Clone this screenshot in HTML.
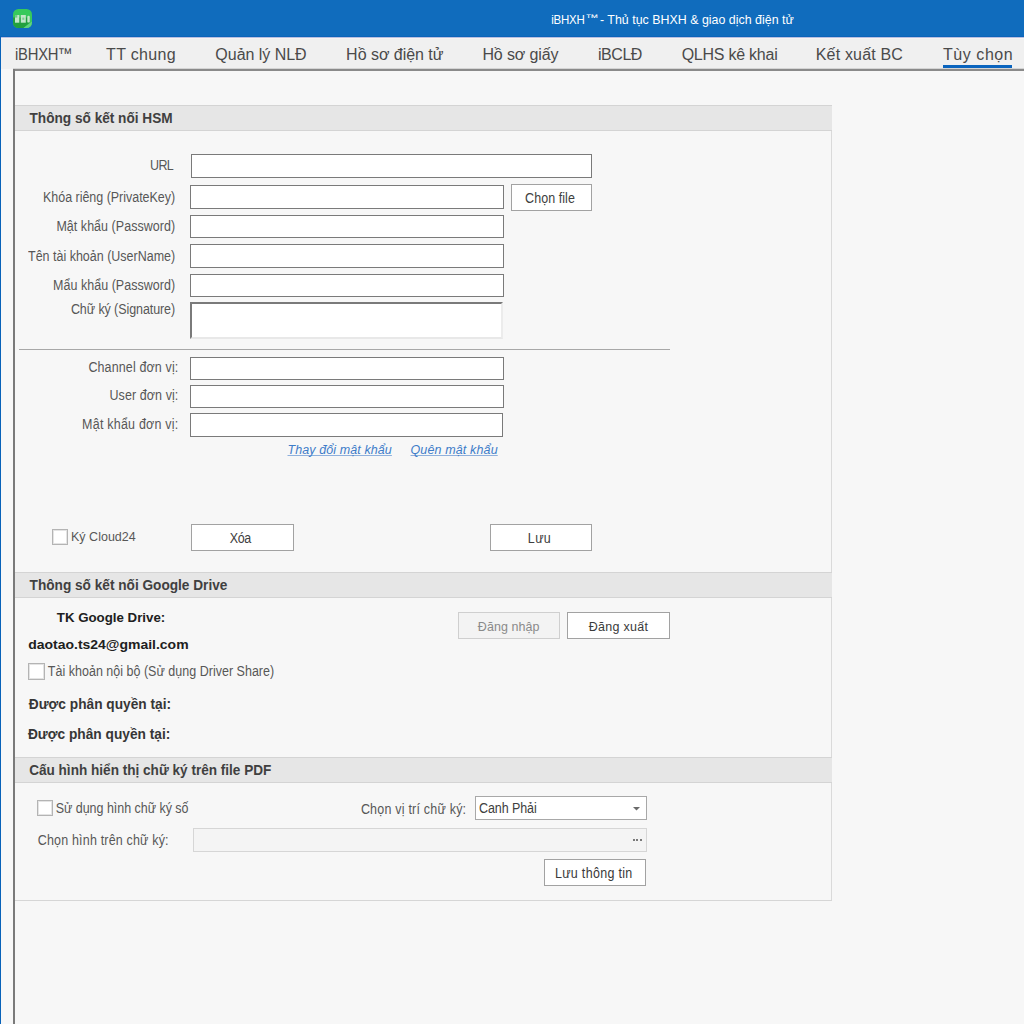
<!DOCTYPE html>
<html><head><meta charset="utf-8"><style>
html,body{margin:0;padding:0;width:1024px;height:1024px;overflow:hidden;background:#f7f7f7;}
body{position:relative;font-family:"Liberation Sans",sans-serif;}
.t{position:absolute;white-space:nowrap;}
</style></head><body>
<div style="position:absolute;left:0px;top:0px;width:1024px;height:37px;box-sizing:border-box;background:#106cbd;"></div>
<svg style="position:absolute;left:13px;top:9px" width="19" height="19" viewBox="0 0 19 19">
<defs><clipPath id="ic"><rect x="0" y="0" width="19" height="19" rx="5.5" ry="5.5"/></clipPath></defs>
<g clip-path="url(#ic)">
<rect x="0" y="0" width="19" height="19" fill="#37c95b"/>
<path d="M0 8.5 L17 8.5 L17 13.5 L10.5 19 L0 19 Z" fill="#22a03d"/>
<path d="M10.5 19 L19 12.5 L19 19 Z" fill="#5fd47b"/>
<rect x="2" y="6" width="4.3" height="7.7" fill="#c2e7c9"/>
<rect x="2" y="6" width="2.3" height="2.6" fill="#6fca87"/>
<rect x="7.8" y="6" width="5" height="7.7" fill="#c2e7c9"/>
<rect x="9.3" y="8.6" width="2" height="2.2" fill="#7ccd90"/>
<rect x="14.3" y="6.7" width="2.5" height="6.9" rx="1.2" fill="#c2e7c9"/>
</g></svg>
<div class="t" style="transform:scaleY(1.08);transform-origin:0 10.00px;left:551.21px;top:14.00px;font-size:11.50px;line-height:12.00px;letter-spacing:-0.221px;color:#ffffff;">iBHXH</div>
<div class="t" style="transform:scaleY(0.72);transform-origin:0 2.86px;left:585.21px;top:12.00px;font-size:13.25px;line-height:15.00px;letter-spacing:0.000px;color:#ffffff;">™</div>
<div class="t" style="left:600.00px;top:13.00px;font-size:12.40px;line-height:14.00px;letter-spacing:0.014px;color:#ffffff;">- Thủ tục BHXH &amp; giao dịch điện tử</div>
<div style="position:absolute;left:1px;top:37px;width:1023px;height:32px;box-sizing:border-box;background:#f0f0f0;"></div>
<div style="position:absolute;left:0px;top:36px;width:1024px;height:1px;box-sizing:border-box;background:#0b64b9;"></div>
<div style="position:absolute;left:1px;top:37px;width:1023px;height:1px;box-sizing:border-box;background:#b9c0e2;"></div>
<div style="position:absolute;left:1px;top:38px;width:1023px;height:1px;box-sizing:border-box;background:#f6f4f2;"></div>
<div class="t" style="left:57.73px;top:45.00px;font-size:15.19px;line-height:17.00px;letter-spacing:0.000px;color:#4a4a4a;">™</div>
<div class="t" style="transform:scaleY(1.08);transform-origin:0 13.00px;left:15.01px;top:47.00px;font-size:14.80px;line-height:16.00px;letter-spacing:-0.238px;color:#4a4a4a;">iBHXH</div>
<div class="t" style="left:106.08px;top:46.00px;font-size:16.00px;line-height:17.00px;letter-spacing:0.319px;color:#4a4a4a;">TT chung</div>
<div class="t" style="left:215.36px;top:46.00px;font-size:16.00px;line-height:17.00px;letter-spacing:-0.028px;color:#4a4a4a;">Quản lý NLĐ</div>
<div class="t" style="left:346.12px;top:46.00px;font-size:16.00px;line-height:17.00px;letter-spacing:-0.028px;color:#4a4a4a;">Hồ sơ điện tử</div>
<div class="t" style="left:482.42px;top:46.00px;font-size:16.00px;line-height:17.00px;letter-spacing:-0.112px;color:#4a4a4a;">Hồ sơ giấy</div>
<div class="t" style="left:598.04px;top:46.00px;font-size:16.00px;line-height:17.00px;letter-spacing:-0.475px;color:#4a4a4a;">iBCLĐ</div>
<div class="t" style="left:681.66px;top:46.00px;font-size:16.00px;line-height:17.00px;letter-spacing:-0.243px;color:#4a4a4a;">QLHS kê khai</div>
<div class="t" style="left:815.72px;top:46.00px;font-size:16.00px;line-height:17.00px;letter-spacing:0.182px;color:#4a4a4a;">Kết xuất BC</div>
<div class="t" style="left:942.98px;top:46.00px;font-size:16.00px;line-height:17.00px;letter-spacing:0.558px;color:#4a4a4a;">Tùy chọn</div>
<div style="position:absolute;left:943px;top:65px;width:69px;height:3px;box-sizing:border-box;background:#0a64be;"></div>
<div style="position:absolute;left:1px;top:69px;width:1023px;height:955px;box-sizing:border-box;background:#f7f7f7;"></div>
<div style="position:absolute;left:13px;top:68px;width:1011px;height:1px;box-sizing:border-box;background:#d4d4d4;"></div>
<div style="position:absolute;left:13px;top:69px;width:1011px;height:2px;box-sizing:border-box;background:#8a8a8a;"></div>
<div style="position:absolute;left:13px;top:69px;width:2px;height:955px;box-sizing:border-box;background:#7a7a7a;"></div>
<div style="position:absolute;left:0px;top:36px;width:1px;height:988px;box-sizing:border-box;background:#0862b9;"></div>
<div style="position:absolute;left:831px;top:105px;width:1px;height:796px;box-sizing:border-box;background:#dadada;"></div>
<div style="position:absolute;left:15px;top:900px;width:817px;height:1px;box-sizing:border-box;background:#d6d6d6;"></div>
<div style="position:absolute;left:15px;top:105px;width:817px;height:26px;box-sizing:border-box;background:#e6e6e6;border-top:1px solid #d4d4d4;border-bottom:1px solid #d4d4d4;"></div>
<div class="t" style="transform:scaleY(1.12);transform-origin:0 12.00px;left:29.56px;top:111.00px;font-size:13.64px;line-height:15.00px;letter-spacing:0.000px;font-weight:bold;color:#404040;">Thông số kết nối HSM</div>
<div style="position:absolute;left:15px;top:572px;width:817px;height:26px;box-sizing:border-box;background:#e6e6e6;border-top:1px solid #d4d4d4;border-bottom:1px solid #d4d4d4;"></div>
<div class="t" style="transform:scaleY(1.12);transform-origin:0 12.00px;left:29.56px;top:578.00px;font-size:13.65px;line-height:15.00px;letter-spacing:0.000px;font-weight:bold;color:#404040;">Thông số kết nối Google Drive</div>
<div style="position:absolute;left:15px;top:757px;width:817px;height:26px;box-sizing:border-box;background:#e6e6e6;border-top:1px solid #d4d4d4;border-bottom:1px solid #d4d4d4;"></div>
<div class="t" style="transform:scaleY(1.12);transform-origin:0 12.00px;left:29.16px;top:763.00px;font-size:13.58px;line-height:15.00px;letter-spacing:0.000px;font-weight:bold;color:#404040;">Cấu hình hiển thị chữ ký trên file PDF</div>
<div class="t" style="transform:scaleY(1.1);transform-origin:0 11.00px;left:150.12px;top:159.00px;font-size:12.50px;line-height:14.00px;letter-spacing:-0.652px;color:#575757;">URL</div>
<div style="position:absolute;left:191px;top:154px;width:401px;height:24px;box-sizing:border-box;background:#fff;border:1px solid #7a7a7a;"></div>
<div class="t" style="transform:scaleY(1.1);transform-origin:0 11.00px;left:43.00px;top:191.00px;font-size:12.50px;line-height:14.00px;letter-spacing:-0.025px;color:#575757;">Khóa riêng (PrivateKey)</div>
<div style="position:absolute;left:190px;top:185px;width:314px;height:24px;box-sizing:border-box;background:#fff;border:1px solid #7a7a7a;"></div>
<div style="position:absolute;left:511px;top:184px;width:81px;height:27px;box-sizing:border-box;background:#fff;border:1px solid #a2a2a2;"></div>
<div class="t" style="transform:scaleY(1.1);transform-origin:0 11.00px;left:525.08px;top:192.00px;font-size:12.50px;line-height:14.00px;letter-spacing:0.055px;color:#404040;">Chọn file</div>
<div class="t" style="transform:scaleY(1.1);transform-origin:0 11.00px;left:56.40px;top:220.00px;font-size:12.50px;line-height:14.00px;letter-spacing:0.037px;color:#575757;">Mật khẩu (Password)</div>
<div style="position:absolute;left:190px;top:215px;width:314px;height:23px;box-sizing:border-box;background:#fff;border:1px solid #7a7a7a;"></div>
<div class="t" style="transform:scaleY(1.1);transform-origin:0 11.00px;left:28.05px;top:250.00px;font-size:12.50px;line-height:14.00px;letter-spacing:-0.007px;color:#575757;">Tên tài khoản (UserName)</div>
<div style="position:absolute;left:190px;top:244px;width:314px;height:24px;box-sizing:border-box;background:#fff;border:1px solid #7a7a7a;"></div>
<div class="t" style="transform:scaleY(1.1);transform-origin:0 11.00px;left:53.00px;top:279.00px;font-size:12.50px;line-height:14.00px;letter-spacing:0.033px;color:#575757;">Mẩu khẩu (Password)</div>
<div style="position:absolute;left:190px;top:274px;width:314px;height:23px;box-sizing:border-box;background:#fff;border:1px solid #7a7a7a;"></div>
<div class="t" style="transform:scaleY(1.1);transform-origin:0 11.00px;left:70.88px;top:303.00px;font-size:12.50px;line-height:14.00px;letter-spacing:-0.079px;color:#575757;">Chữ ký (Signature)</div>
<div style="position:absolute;left:190px;top:302px;width:313px;height:37px;box-sizing:border-box;background:#fff;border-top:2px solid #7a7a7a;border-left:2px solid #7a7a7a;border-right:2px solid #ececec;border-bottom:2px solid #e8e8e8;"></div>
<div style="position:absolute;left:19px;top:349px;width:651px;height:1px;box-sizing:border-box;background:#a8a8a8;"></div>
<div class="t" style="transform:scaleY(1.1);transform-origin:0 11.00px;left:88.38px;top:361.00px;font-size:12.50px;line-height:14.00px;letter-spacing:0.129px;color:#575757;">Channel đơn vị:</div>
<div style="position:absolute;left:190px;top:357px;width:314px;height:23px;box-sizing:border-box;background:#fff;border:1px solid #7a7a7a;"></div>
<div class="t" style="transform:scaleY(1.1);transform-origin:0 11.00px;left:109.53px;top:389.00px;font-size:12.50px;line-height:14.00px;letter-spacing:0.076px;color:#575757;">User đơn vị:</div>
<div style="position:absolute;left:190px;top:385px;width:314px;height:23px;box-sizing:border-box;background:#fff;border:1px solid #7a7a7a;"></div>
<div class="t" style="transform:scaleY(1.1);transform-origin:0 11.00px;left:82.10px;top:418.00px;font-size:12.50px;line-height:14.00px;letter-spacing:0.216px;color:#575757;">Mật khẩu đơn vị:</div>
<div style="position:absolute;left:190px;top:413px;width:313px;height:24px;box-sizing:border-box;background:#fff;border:1px solid #7a7a7a;"></div>
<div class="t" style="left:287.50px;top:443.00px;font-size:12.50px;line-height:14.00px;letter-spacing:0.092px;font-style:italic;color:#3d7cc9;text-decoration:underline;text-decoration-skip-ink:none;text-decoration-color:#8fb0dc;">Thay đổi mật khẩu</div>
<div class="t" style="left:410.50px;top:443.00px;font-size:12.50px;line-height:14.00px;letter-spacing:0.136px;font-style:italic;color:#3d7cc9;text-decoration:underline;text-decoration-skip-ink:none;text-decoration-color:#8fb0dc;">Quên mật khẩu</div>
<div style="position:absolute;left:52px;top:529px;width:16px;height:16px;box-sizing:border-box;background:#fff;border:1px solid #b4b4b4;box-shadow:inset 0 0 0 1px #e4e4e4;"></div>
<div class="t" style="left:71.00px;top:530.00px;font-size:12.50px;line-height:14.00px;letter-spacing:0.011px;color:#575757;">Ký Cloud24</div>
<div style="position:absolute;left:191px;top:524px;width:103px;height:27px;box-sizing:border-box;background:#fff;border:1px solid #a2a2a2;"></div>
<div class="t" style="transform:scaleY(1.1);transform-origin:0 11.00px;left:229.65px;top:532.00px;font-size:12.50px;line-height:14.00px;letter-spacing:-0.320px;color:#404040;">Xóa</div>
<div style="position:absolute;left:490px;top:524px;width:102px;height:27px;box-sizing:border-box;background:#fff;border:1px solid #a2a2a2;"></div>
<div class="t" style="transform:scaleY(1.1);transform-origin:0 11.00px;left:527.80px;top:532.00px;font-size:12.50px;line-height:14.00px;letter-spacing:0.378px;color:#404040;">Lưu</div>
<div class="t" style="left:56.77px;top:610.00px;font-size:13.29px;line-height:15.00px;letter-spacing:0.000px;font-weight:bold;color:#202020;">TK Google Drive:</div>
<div class="t" style="transform:scaleY(0.88);transform-origin:0 13.00px;left:28.24px;top:636.00px;font-size:13.98px;line-height:16.00px;letter-spacing:0.000px;font-weight:bold;color:#202020;">daotao.ts24@gmail.com</div>
<div style="position:absolute;left:458px;top:612px;width:102px;height:27px;box-sizing:border-box;background:#f3f3f3;border:1px solid #cfcfcf;"></div>
<div class="t" style="left:477.80px;top:620.00px;font-size:12.50px;line-height:14.00px;letter-spacing:0.061px;color:#8a8a8a;">Đăng nhập</div>
<div style="position:absolute;left:567px;top:612px;width:103px;height:27px;box-sizing:border-box;background:#fff;border:1px solid #a2a2a2;"></div>
<div class="t" style="left:588.80px;top:620.00px;font-size:12.50px;line-height:14.00px;letter-spacing:0.286px;color:#3a3a3a;">Đăng xuất</div>
<div style="position:absolute;left:28px;top:663px;width:17px;height:17px;box-sizing:border-box;background:#fff;border:1px solid #b4b4b4;box-shadow:inset 0 0 0 1px #e4e4e4;"></div>
<div class="t" style="transform:scaleY(1.1);transform-origin:0 11.00px;left:47.85px;top:665.00px;font-size:12.50px;line-height:14.00px;letter-spacing:0.012px;color:#575757;">Tài khoản nội bộ (Sử dụng Driver Share)</div>
<div class="t" style="left:28.80px;top:697.00px;font-size:13.71px;line-height:15.00px;letter-spacing:0.000px;font-weight:bold;color:#363636;">Được phân quyền tại:</div>
<div class="t" style="left:27.90px;top:727.00px;font-size:13.72px;line-height:15.00px;letter-spacing:0.000px;font-weight:bold;color:#363636;">Được phân quyền tại:</div>
<div style="position:absolute;left:37px;top:800px;width:16px;height:16px;box-sizing:border-box;background:#fff;border:1px solid #b4b4b4;box-shadow:inset 0 0 0 1px #e4e4e4;"></div>
<div class="t" style="transform:scaleY(1.1);transform-origin:0 11.00px;left:55.70px;top:802.00px;font-size:12.50px;line-height:14.00px;letter-spacing:-0.032px;color:#575757;">Sử dụng hình chữ ký số</div>
<div class="t" style="transform:scaleY(1.1);transform-origin:0 11.00px;left:360.88px;top:803.00px;font-size:12.50px;line-height:14.00px;letter-spacing:0.209px;color:#575757;">Chọn vị trí chữ ký:</div>
<div style="position:absolute;left:475px;top:796px;width:172px;height:24px;box-sizing:border-box;background:#fff;border:1px solid #a8a8a8;"></div>
<div class="t" style="transform:scaleY(1.1);transform-origin:0 11.00px;left:479.07px;top:802.00px;font-size:12.50px;line-height:14.00px;letter-spacing:-0.096px;color:#404040;">Canh Phải</div>
<svg style="position:absolute;left:633px;top:807px" width="7" height="4"><path d="M0 0 L7 0 L3.5 3.5 Z" fill="#6a6a6a"/></svg>
<div class="t" style="transform:scaleY(1.1);transform-origin:0 11.00px;left:37.77px;top:834.00px;font-size:12.50px;line-height:14.00px;letter-spacing:0.173px;color:#575757;">Chọn hình trên chữ ký:</div>
<div style="position:absolute;left:193px;top:828px;width:454px;height:24px;box-sizing:border-box;background:#f4f4f4;border:1px solid #d6d6d6;"></div>
<div style="position:absolute;left:633px;top:839px;width:10px;height:2px;background:repeating-linear-gradient(90deg,#7a7a7a 0 2px,transparent 2px 3.5px);"></div>
<div style="position:absolute;left:544px;top:859px;width:102px;height:27px;box-sizing:border-box;background:#fff;border:1px solid #a2a2a2;"></div>
<div class="t" style="transform:scaleY(1.1);transform-origin:0 11.00px;left:554.90px;top:867.00px;font-size:12.50px;line-height:14.00px;letter-spacing:0.308px;color:#3a3a3a;">Lưu thông tin</div>
</body></html>
